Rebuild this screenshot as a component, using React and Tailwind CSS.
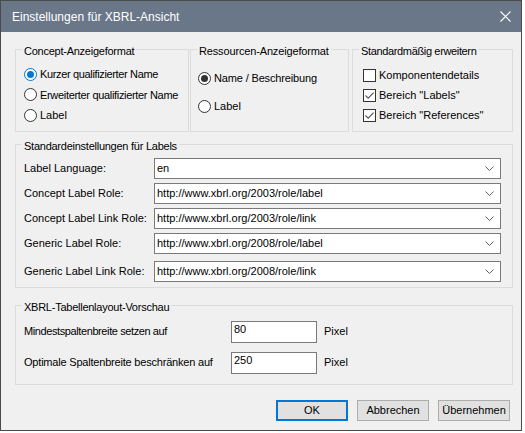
import React from "react";

function Radio({ variant }) {
  if (variant === "blue") {
    return (
      <span className="flex h-[13px] w-[13px] shrink-0 items-center justify-center rounded-full border border-[#0078d7] bg-white">
        <span className="h-[7px] w-[7px] rounded-full bg-[#0078d7]" />
      </span>
    );
  }
  if (variant === "dark") {
    return (
      <span className="flex h-[13px] w-[13px] shrink-0 items-center justify-center rounded-full border border-[#333333] bg-white">
        <span className="h-[7px] w-[7px] rounded-full bg-[#333333]" />
      </span>
    );
  }
  return <span className="h-[13px] w-[13px] shrink-0 rounded-full border border-[#333333] bg-white" />;
}

function Check({ checked }) {
  return (
    <span className="flex h-[13px] w-[13px] shrink-0 items-center justify-center border border-[#333333] bg-white">
      {checked && (
        <svg width="11" height="11" viewBox="0 0 11 11">
          <path d="M1.5 5.5 L4.2 8.2 L9.6 2.6" fill="none" stroke="#555555" strokeWidth="1.1" />
        </svg>
      )}
    </span>
  );
}

function Combo({ value }) {
  return (
    <div className="flex h-[21px] w-[347px] items-center border border-[#7a7a7a] bg-white pl-[2px] pr-[6px]">
      <span className="flex-1 leading-[13px]">{value}</span>
      <svg width="9" height="5" viewBox="0 0 9 5">
        <path d="M0.5 0.5 L4.5 4.5 L8.5 0.5" fill="none" stroke="#606060" strokeWidth="1" />
      </svg>
    </div>
  );
}

function Legend({ children, className }) {
  return <legend className={"ml-[6px] px-[2px] pt-[4px] leading-[13px] " + className}>{children}</legend>;
}

export default function App() {
  const labelRows = [
    ["Label Language:", "en"],
    ["Concept Label Role:", "http://www.xbrl.org/2003/role/label"],
    ["Concept Label Link Role:", "http://www.xbrl.org/2003/role/link"],
    ["Generic Label Role:", "http://www.xbrl.org/2008/role/label"],
  ];
  return (
    <div className="h-[433px] w-[525px] bg-white font-['Liberation_Sans',Arial,sans-serif] text-[11px] text-black">
      <div className="flex h-[431px] w-[522px] flex-col border border-[#4a4a4a]">
        <div className="flex h-[31px] shrink-0 items-center justify-between bg-[#6a7789] pl-[11px] pr-[10px]">
          <span className="text-[12px] text-white">Einstellungen für XBRL-Ansicht</span>
          <svg width="11" height="11" viewBox="0 0 11 11">
            <path d="M0.5 0.5 L10.5 10.5 M10.5 0.5 L0.5 10.5" stroke="#ffffff" strokeWidth="1.1" />
          </svg>
        </div>
        <div className="flex flex-1 flex-col bg-[#f0f0f0] pl-[14px] pt-[9px]">
          <div className="flex h-[91px]">
            <fieldset className="h-[91px] w-[174px] border border-[#dcdcdc]">
              <Legend className="tracking-[-0.25px]">Concept-Anzeigeformat</Legend>
              <div className="flex flex-col pl-[8px] pt-[6px]">
                <div className="flex h-[20.5px] items-center gap-[3px]">
                  <Radio variant="blue" />
                  <span className="tracking-[-0.35px]">Kurzer qualifizierter Name</span>
                </div>
                <div className="flex h-[20.5px] items-center gap-[3px]">
                  <Radio />
                  <span className="tracking-[-0.32px]">Erweiterter qualifizierter Name</span>
                </div>
                <div className="flex h-[20.5px] items-center gap-[3px]">
                  <Radio />
                  <span>Label</span>
                </div>
              </div>
            </fieldset>
            <fieldset className="ml-[1px] h-[91px] w-[159px] border border-[#dcdcdc]">
              <Legend className="tracking-[-0.15px]">Ressourcen-Anzeigeformat</Legend>
              <div className="flex flex-col pl-[7px] pt-[6px]">
                <div className="flex h-[28px] items-center gap-[3px]">
                  <Radio variant="dark" />
                  <span className="tracking-[-0.15px]">Name / Beschreibung</span>
                </div>
                <div className="flex h-[28px] items-center gap-[3px]">
                  <Radio />
                  <span>Label</span>
                </div>
              </div>
            </fieldset>
            <fieldset className="ml-[3px] h-[91px] w-[161px] border border-[#dcdcdc]">
              <Legend className="tracking-[-0.35px]">Standardmäßig erweitern</Legend>
              <div className="flex flex-col pl-[10px] pt-[7px]">
                <div className="flex h-[20px] items-center gap-[3px]">
                  <Check />
                  <span>Komponentendetails</span>
                </div>
                <div className="flex h-[20px] items-center gap-[3px]">
                  <Check checked />
                  <span>Bereich "Labels"</span>
                </div>
                <div className="flex h-[20px] items-center gap-[3px]">
                  <Check checked />
                  <span>Bereich "References"</span>
                </div>
              </div>
            </fieldset>
          </div>

          <fieldset className="mt-[4px] w-[498px] border border-[#dcdcdc]">
            <Legend className="tracking-[-0.25px]">Standardeinstellungen für Labels</Legend>
            <div className="flex flex-col pb-[3px] pl-[8px] pt-[3px]">
              {labelRows.map(([l, v]) => (
                <div key={l} className="flex h-[25px] items-center">
                  <span className="w-[130px]">{l}</span>
                  <Combo value={v} />
                </div>
              ))}
              <div className="mt-[3px] flex h-[25px] items-center">
                <span className="w-[130px]">Generic Label Link Role:</span>
                <Combo value="http://www.xbrl.org/2008/role/link" />
              </div>
            </div>
          </fieldset>

          <fieldset className="mt-[9px] w-[498px] border border-[#dcdcdc]">
            <Legend className="tracking-[-0.25px]">XBRL-Tabellenlayout-Vorschau</Legend>
            <div className="flex flex-col pb-[6px] pl-[8px] pt-[2px]">
              <div className="flex h-[31px] items-center">
                <span className="w-[207px] tracking-[-0.4px]">Mindestspaltenbreite setzen auf</span>
                <div className="h-[22px] w-[86px] border border-[#7a7a7a] bg-white px-[2px] pt-[1px] leading-[13px]">80</div>
                <span className="ml-[7px]">Pixel</span>
              </div>
              <div className="flex h-[31px] items-center">
                <span className="w-[207px] tracking-[-0.2px]">Optimale Spaltenbreite beschränken auf</span>
                <div className="h-[22px] w-[86px] border border-[#7a7a7a] bg-white px-[2px] pt-[1px] leading-[13px]">250</div>
                <span className="ml-[7px]">Pixel</span>
              </div>
            </div>
          </fieldset>

          <div className="mt-[15px] flex justify-end gap-[9px] pr-[11px]">
            <button className="flex h-[21px] w-[72px] items-center justify-center border-2 border-[#0078d7] bg-[#e1e1e1]">OK</button>
            <button className="flex h-[21px] w-[72px] items-center justify-center border border-[#adadad] bg-[#e1e1e1]">Abbrechen</button>
            <button className="flex h-[21px] w-[72px] items-center justify-center border border-[#adadad] bg-[#e1e1e1]">Übernehmen</button>
          </div>
        </div>
      </div>
    </div>
  );
}
